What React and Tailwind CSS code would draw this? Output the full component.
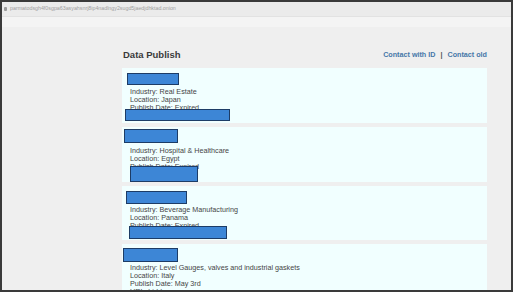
import React from "react";

const cards = [
  {
    industry: "Real Estate",
    location: "Japan",
    date: "Expired",
    top: "mt-[5px] ml-[5px] w-[52px] h-[12px]",
    textTop: "mt-[3px]",
    bottom: "-mt-[3px] ml-[3px] w-[105px] h-[12px]",
    pad: "h-[55px]",
  },
  {
    industry: "Hospital & Healthcare",
    location: "Egypt",
    date: "Expired",
    top: "mt-[2px] ml-[2px] w-[54px] h-[14px]",
    textTop: "mt-[4px]",
    bottom: "-mt-[5px] ml-[8px] w-[68px] h-[16px]",
    pad: "h-[55px]",
  },
  {
    industry: "Beverage Manufacturing",
    location: "Panama",
    date: "Expired",
    top: "mt-[5px] ml-[4px] w-[61px] h-[13px]",
    textTop: "mt-[2px]",
    bottom: "-mt-[4px] ml-[7px] w-[98px] h-[13px]",
    pad: "h-[54px]",
  },
  {
    industry: "Level Gauges, valves and industrial gaskets",
    location: "Italy",
    date: "May 3rd",
    top: "mt-[4px] ml-[1px] w-[55px] h-[14px]",
    textTop: "mt-[2px]",
    bottom: null,
    pad: "h-[60px]",
  },
];

const Card = ({ c }) => (
  <div className={`bg-[#f1ffff] flex flex-col shrink-0 ${c.pad} overflow-hidden`}>
    <div className={`${c.top} shrink-0 bg-[#3d86d6] border border-[#1d3c66]`} />
    <div
      className={`${c.textTop} pl-[8px] text-[7.2px] leading-[8px] text-[#454545]`}
    >
      <div>Industry: {c.industry}</div>
      <div>Location: {c.location}</div>
      <div>Publish Date: {c.date}</div>
      {!c.bottom && <div>URL: hidden</div>}
    </div>
    {c.bottom && (
      <div className={`${c.bottom} shrink-0 bg-[#3d86d6] border border-[#1d3c66]`} />
    )}
  </div>
);

export default function App() {
  return (
    <div
      className="w-[516px] h-[297px] bg-white"
      style={{ fontFamily: '"Liberation Sans", Arial, sans-serif' }}
    >
      <div className="w-[513px] h-[292px] border-2 border-[#3a3a3a] flex flex-col overflow-hidden">
        <div className="h-[15px] shrink-0 bg-[#ebebeb] flex items-center gap-[3px] pl-[2px] border-b border-[#e2e2e2]">
          <span className="w-[3px] h-[4px] bg-[#9a9a9a] rounded-[1px]" />
          <span className="text-[5.3px] text-[#a0a0a0]">
            parmatodsgh4f0sgpa63asyahsnrj8ip4nadlngy2sugd5jaedjdhktad.onion
          </span>
        </div>
        <div className="h-[10px] shrink-0 bg-[#f4f4f4]" />
        <div className="flex-1 min-h-0 bg-[#efefef] pl-[120px]">
          <div className="w-[365px] flex flex-col">
            <div className="flex items-center justify-between h-[18px] mt-[19px] mb-[4px]">
              <span className="text-[9.5px] font-bold text-[#3a3a3a] pl-[1px]">
                Data Publish
              </span>
              <span className="text-[7.2px] font-bold text-[#4677a8]">
                Contact with ID <span className="mx-[3px] text-[#555]">|</span> Contact old
              </span>
            </div>
            <div className="flex flex-col gap-[4px]">
              {cards.map((c, i) => (
                <Card key={i} c={c} />
              ))}
            </div>
          </div>
        </div>
      </div>
    </div>
  );
}
